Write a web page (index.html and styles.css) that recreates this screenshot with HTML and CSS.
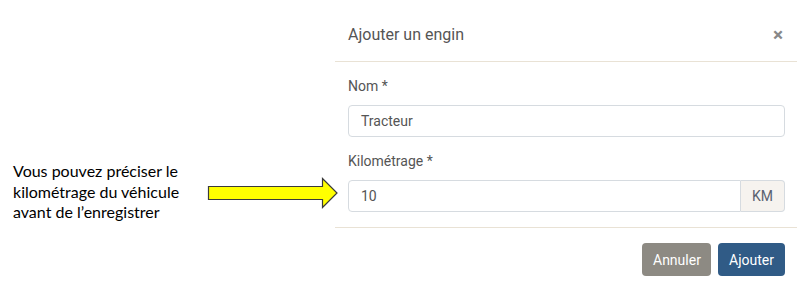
FILE: index.html
```html
<!DOCTYPE html>
<html lang="fr">
<head>
<meta charset="utf-8">
<link rel="stylesheet" href="styles.css">
</head>
<body>
<div class="page">
  <aside class="note">
    <p class="note-text">Vous pouvez préciser le kilométrage du véhicule avant de l’enregistrer</p>
    <svg class="arrow" width="132" height="32" viewBox="0 0 132 32">
      <path d="M1.5 9.5 H115.5 V1.5 L130 16 L115.5 30.5 V22.5 H1.5 Z" fill="#ffff00" stroke="#3a3a3a" stroke-width="1.2" stroke-linejoin="miter"/>
    </svg>
  </aside>
  <section class="modal">
    <header class="modal-header">
      <h1 class="modal-title">Ajouter un engin</h1>
      <span class="close">×</span>
    </header>
    <div class="modal-body">
      <div class="field">
        <label class="label">Nom *</label>
        <div class="input">Tracteur</div>
      </div>
      <div class="field">
        <label class="label">Kilométrage *</label>
        <div class="input-group">
          <div class="input grouped">10</div>
          <span class="addon">KM</span>
        </div>
      </div>
    </div>
    <footer class="modal-footer">
      <button class="btn btn-cancel">Annuler</button>
      <button class="btn btn-primary">Ajouter</button>
    </footer>
  </section>
</div>
</body>
</html>
```
FILE: styles.css
```css
* { box-sizing: border-box; }
html, body { margin: 0; padding: 0; background: #fff; }
body { width: 797px; height: 290px; overflow: hidden; }
.page { display: flex; }
.note {
  width: 335px;
  padding-top: 161px;
  padding-left: 13px;
  display: flex;
  align-items: flex-start;
}
.note-text {
  margin: 0;
  width: 194px;
  flex: none;
  font-family: Lato, "Open Sans", sans-serif;
  font-size: 16px;
  line-height: 20.5px;
  color: #000;
}
.arrow { margin-left: 0; margin-top: 16px; flex: none; }
.modal {
  width: 462px;
  font-family: Roboto, "Noto Sans", sans-serif;
  color: #555;
}
.modal-header {
  display: flex;
  justify-content: space-between;
  align-items: center;
  padding: 22px 13px 14px 13px;
  border-bottom: 1px solid #e9e2d5;
}
.modal-title {
  margin: 0;
  font-size: 16px;
  font-weight: 400;
  line-height: 25px;
  color: #555;
}
.close {
  font-size: 19px;
  font-weight: 700;
  color: #888;
  line-height: 20px;
  margin-right: 1px;
}
.modal-body { padding: 14px 12px 15px 13px; }
.field + .field { margin-top: 14px; }
.label {
  display: block;
  font-size: 14px;
  line-height: 20px;
  margin-bottom: 9px;
  color: #555;
}
.input {
  height: 32px;
  border: 1px solid #d6dbe0;
  border-radius: 4px;
  padding: 0 12px;
  font-size: 14px;
  line-height: 30px;
  color: #555;
}
.input-group { display: flex; }
.input.grouped { flex: 1; border-radius: 4px 0 0 4px; }
.addon {
  width: 44px;
  height: 32px;
  border: 1px solid #d6dbe0;
  border-left: none;
  border-radius: 0 4px 4px 0;
  background: #f6f3ef;
  font-size: 14px;
  line-height: 30px;
  text-align: center;
  color: #596170;
}
.modal-footer {
  border-top: 1px solid #e9e2d5;
  padding: 15px 12px 0 0;
  display: flex;
  justify-content: flex-end;
  gap: 7px;
}
.btn {
  height: 33px;
  border: none;
  border-radius: 4px;
  padding: 0 11px;
  font-family: Roboto, "Noto Sans", sans-serif;
  font-size: 14px;
  color: #fff;
}
.btn-cancel { background: #8d8a83; width: 69px; }
.btn-primary { background: #305b86; width: 67px; }
```
